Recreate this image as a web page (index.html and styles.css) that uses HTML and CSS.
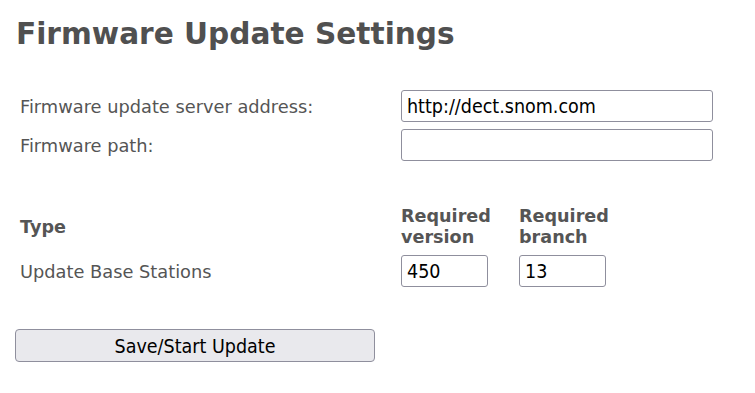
FILE: index.html
```html
<!DOCTYPE html>
<html lang="en">
<head>
    <meta charset="UTF-8">
    <title>Firmware Update Settings</title>
    <link rel="stylesheet" href="styles.css">
</head>
<body>
    <h1>Firmware Update Settings</h1>
    <form class="settings">
        <div class="grid">
            <label class="label" for="server">Firmware update server address:</label>
            <input class="field wide" id="server" type="text" value="http://dect.snom.com">
            <label class="label" for="path">Firmware path:</label>
            <input class="field wide" id="path" type="text" value="">

            <div class="head">Type</div>
            <div class="head">Required<br>version</div>
            <div class="head">Required<br>branch</div>

            <div class="label">Update Base Stations</div>
            <input class="field small" type="text" value="450">
            <input class="field small" type="text" value="13">
        </div>
        <button class="btn" type="button">Save/Start Update</button>
    </form>
</body>
</html>
```

FILE: styles.css
```css
body {
    margin: 0;
    padding: 15px 15px;
    font-family: "DejaVu Sans", Verdana, sans-serif;
    color: #555;
    background: #fff;
}
h1 {
    margin: 0 0 0 1px;
    font-size: 29.6px;
    line-height: 38px;
    font-weight: bold;
    color: #505050;
}
.grid {
    display: grid;
    grid-template-columns: 381px 118px 120px;
    align-items: center;
    row-gap: 7px;
    margin: 37px 0 0 5px;
}
.label {
    font-size: 17.8px;
}
.head {
    font-size: 17.6px;
    font-weight: bold;
    line-height: 21px;
    padding-top: 1px;
    margin-top: 37px;
}
.field {
    box-sizing: border-box;
    height: 32px;
    border: 1px solid #8f8f9d;
    border-radius: 3px;
    padding: 0 5px;
    font-family: "DejaVu Sans Condensed", "DejaVu Sans", sans-serif;
    font-size: 19.5px;
    color: #000;
    background: #fff;
}
.field.wide {
    grid-column: span 2;
    width: 312px;
}
.field.small {
    width: 87px;
}
.btn {
    display: block;
    box-sizing: border-box;
    width: 360px;
    height: 33px;
    margin-top: 42px;
    padding: 2px 0 0;
    border: 1px solid #8f8f9d;
    border-radius: 4px;
    background: #e9e9ed;
    font-family: "DejaVu Sans Condensed", "DejaVu Sans", sans-serif;
    font-size: 19.5px;
    color: #000;
}
```
